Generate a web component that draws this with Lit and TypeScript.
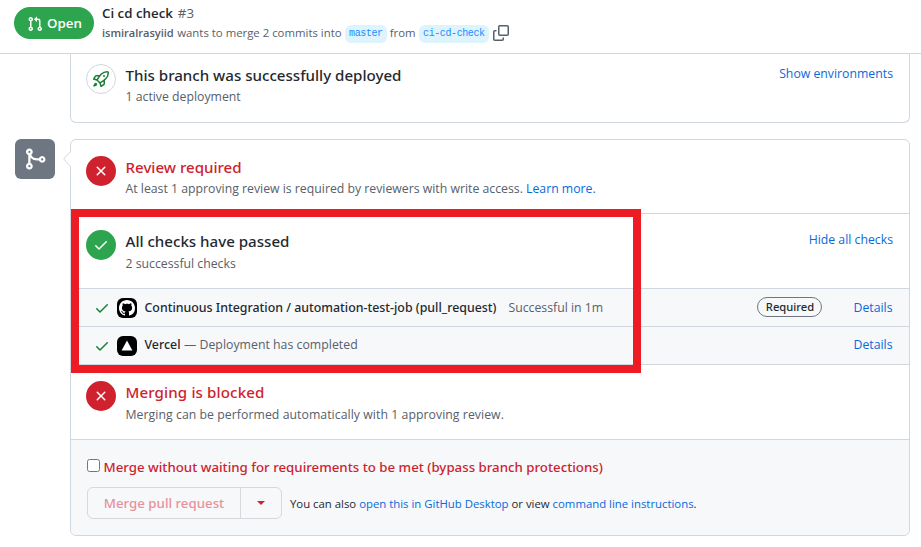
import { LitElement, html, css } from "lit";
import { customElement } from "lit/decorators.js";

const icons: Record<string, string> = {
  pull: "M7.177 3.073L9.573.677A.25.25 0 0110 .854v4.792a.25.25 0 01-.427.177L7.177 3.427a.25.25 0 010-.354zM3.75 2.5a.75.75 0 100 1.5.75.75 0 000-1.5zm-2.25.75a2.25 2.25 0 113 2.122v5.256a2.251 2.251 0 11-1.5 0V5.372A2.25 2.25 0 011.5 3.25zM11 2.5h-1V4h1a1 1 0 011 1v5.628a2.251 2.251 0 101.5 0V5A2.5 2.5 0 0011 2.5zm1 10.25a.75.75 0 111.5 0 .75.75 0 01-1.5 0zM3.75 12a.75.75 0 100 1.5.75.75 0 000-1.5z",
  merge: "M5 3.254V3.25v.005a.75.75 0 110-.005v.004zm.45 1.9a2.25 2.25 0 10-1.95.218v5.256a2.25 2.25 0 101.5 0V7.123A5.735 5.735 0 009.25 9h1.378a2.251 2.251 0 100-1.5H9.25a4.25 4.25 0 01-3.8-2.346zM12.75 9a.75.75 0 100-1.5.75.75 0 000 1.5zm-8.5 4.5a.75.75 0 100-1.5.75.75 0 000 1.5z",
  x: "M3.72 3.72a.75.75 0 011.06 0L8 6.94l3.22-3.22a.75.75 0 111.06 1.06L9.06 8l3.22 3.22a.75.75 0 11-1.06 1.06L8 9.06l-3.22 3.22a.75.75 0 01-1.06-1.06L6.94 8 3.72 4.78a.75.75 0 010-1.06z",
  check: "M13.78 4.22a.75.75 0 010 1.06l-7.25 7.25a.75.75 0 01-1.06 0L2.22 9.28a.75.75 0 011.06-1.06L6 10.94l6.72-6.72a.75.75 0 011.06 0z",
  mark: "M8 0C3.58 0 0 3.58 0 8c0 3.54 2.29 6.53 5.47 7.59.4.07.55-.17.55-.38 0-.19-.01-.82-.01-1.49-2.01.37-2.53-.49-2.69-.94-.09-.23-.48-.94-.82-1.13-.28-.15-.68-.52-.01-.53.63-.01 1.08.58 1.23.82.72 1.21 1.87.87 2.33.66.07-.52.28-.87.51-1.07-1.78-.2-3.64-.89-3.64-3.95 0-.87.31-1.59.82-2.15-.08-.2-.36-1.02.08-2.12 0 0 .67-.21 2.2.82.64-.18 1.32-.27 2-.27s1.36.09 2 .27c1.53-1.04 2.2-.82 2.2-.82.44 1.1.16 1.92.08 2.12.51.56.82 1.27.82 2.15 0 3.07-1.87 3.75-3.65 3.95.29.25.54.73.54 1.48 0 1.07-.01 1.93-.01 2.2 0 .21.15.46.55.38A8.01 8.01 0 0016 8c0-4.42-3.58-8-8-8z",
  rocket: "M14.064 0h.186C15.216 0 16 .784 16 1.75v.186a8.752 8.752 0 0 1-2.564 6.186l-.458.459c-.314.314-.641.616-.979.904v3.207c0 .608-.315 1.172-.833 1.49l-2.774 1.707a.749.749 0 0 1-1.11-.418l-.954-3.102a1.214 1.214 0 0 1-.145-.125L3.754 9.816a1.218 1.218 0 0 1-.124-.145L.528 8.717a.749.749 0 0 1-.418-1.11l1.71-2.774A1.748 1.748 0 0 1 3.31 4h3.204c.288-.338.59-.665.904-.979l.459-.458A8.749 8.749 0 0 1 14.064 0ZM8.938 3.623h-.002l-.458.458c-.76.76-1.437 1.598-2.02 2.5l-1.5 2.317 2.143 2.143 2.317-1.5c.902-.583 1.74-1.26 2.499-2.02l.459-.458a7.25 7.25 0 0 0 2.123-5.127V1.75a.25.25 0 0 0-.25-.25h-.186a7.249 7.249 0 0 0-5.125 2.123ZM3.56 14.56c-.732.732-2.334 1.045-3.005 1.148a.234.234 0 0 1-.201-.064.234.234 0 0 1-.064-.201c.103-.671.416-2.273 1.15-3.003a1.502 1.502 0 1 1 2.12 2.12Zm6.94-3.935c-.088.06-.177.118-.266.175l-2.35 1.521.548 1.783 1.949-1.2a.25.25 0 0 0 .119-.213ZM3.678 8.116 5.2 5.766c.058-.09.117-.178.176-.266H3.309a.25.25 0 0 0-.213.119l-1.2 1.95ZM12 5a1 1 0 1 1-2 0 1 1 0 0 1 2 0Z",
  vercel: "M8 2.6l5.4 10H2.6z",
};

const icon = (name: string, size = 16) => html`<svg width=${size} height=${size} viewBox="0 0 16 16" fill="currentColor"><path fill-rule="evenodd" d=${icons[name]} /></svg>`;

@customElement("app-root")
export class AppRoot extends LitElement {
  static styles = css`
    :host { display: block; position: relative; height: 547px; overflow: hidden; background: #fff; color: #24292f; font-family: "Open Sans", "Noto Sans", sans-serif; font-size: 12.28px; }
    * { box-sizing: border-box; }
    svg { display: block; flex: none; }
    b { font-weight: 600; }
    .header { height: 54px; border-bottom: 1px solid #d0d7de; display: flex; padding: 7px 14px 0; gap: 8px; }
    .state { width: 80px; height: 32px; border-radius: 16px; background: #2da44e; color: #fff; display: flex; align-items: center; gap: 4px; padding-left: 13px; font-size: 13.3px; font-weight: 600; }
    .state svg { margin-top: 1px; }
    .heading { display: flex; flex-direction: column; margin-top: -4px; color: #57606a; white-space: nowrap; }
    .title { font-size: 13.3px; line-height: 20px; }
    .title b { color: #24292f; margin-right: 5px; }
    .meta { display: flex; align-items: center; font-size: 11.38px; height: 20px; line-height: 20px; }
    .meta b { margin-right: 3.5px; font-size: 11.1px; letter-spacing: -0.03px; }
    .branch { font-family: "Liberation Mono", monospace; font-size: 10px; letter-spacing: -0.4px; color: #218bff; background: #ddf4ff; border-radius: 6px; height: 18px; line-height: 18px; padding: 0 4px 0 4.5px; margin: 2px 3px 0; }
    .copy { color: #57606a; margin: -1px 0 0 1px; }
    .main { display: flex; flex-direction: column; padding: 0 11px 0 15px; }
    .card { margin-left: 55px; border: 1px solid #d0d7de; border-radius: 6px; }
    .deploy { border-top: 0; border-radius: 0 0 6px 6px; height: 69px; margin-bottom: 16px; }
    .deploy .section { padding-top: 9px; border: 0; height: 68px; }
    .timeline { display: flex; gap: 15px; align-items: flex-start; }
    .badge { width: 40px; height: 40px; border-radius: 6px; background: #6e7781; color: #fff; display: grid; place-items: center; padding-right: 1px; }
    .merge { flex: 1; margin: 0; position: relative; height: 397px; }
    .notch { position: absolute; left: -8px; top: 11px; }
    .section { display: flex; height: 75px; padding: 15px 16px 0 15px; border-bottom: 1px solid #d0d7de; white-space: nowrap; }
    .review { height: 74px; }
    .dot { width: 30px; height: 30px; margin: 1px 9.5px 0 0; border-radius: 50%; display: grid; place-items: center; color: #fff; flex: none; }
    .red { background: #cf222e; }
    .green { background: #2da44e; }
    .outline { border: 1px solid #d0d7de; color: #1a7f37; }
    .text { flex: 1; }
    h3, .row b, .bypass, .go, .required { font-family: "Noto Sans", sans-serif; font-weight: 500; }
    h3 { margin: 0; font-size: 15.1px; line-height: 24px; }
    .danger { color: #cf222e; }
    .blocked { letter-spacing: 0.12px; }
    p { margin: 0; color: #57606a; line-height: 18px; }
    .low { margin-top: 1px; }
    .lower { margin-top: 2px; }
    .loose { letter-spacing: 0.05px; }
    a { color: #0969da; }
    .link { line-height: 20px; margin-top: 1px; }
    .row { height: 38px; display: flex; align-items: center; background: #f6f8fa; border-bottom: 1px solid #d0d7de; padding: 0 16.5px 0 23px; white-space: nowrap; }
    .row b { font-size: 12.38px; }
    .raised b, .raised span, .raised .right { margin-bottom: 2px; }
    .tick { color: #1a7f37; margin: 1px 7px 0 0; }
    .app { width: 20px; height: 20px; border-radius: 6px; background: #000; color: #fff; display: grid; place-items: center; margin: 1px 7.5px 0 0; }
    .note { color: #57606a; }
    .gap { margin-left: 12px; }
    .dash { margin-left: 3.5px; letter-spacing: 0.03px; }
    .right { margin-left: auto; display: flex; align-items: center; gap: 31px; }
    .required { width: 65px; height: 20px; border: 1px solid #6e7781; border-radius: 10px; font-size: 11.2px; line-height: 18px; text-align: center; margin-bottom: 1px; }
    .footer { height: 95px; background: #f6f8fa; border-radius: 0 0 6px 6px; padding: 17px 16px; white-space: nowrap; }
    .bypass { display: flex; align-items: center; height: 20px; font-size: 13.28px; color: #cf222e; }
    .box { width: 13px; height: 13px; border: 1px solid #767676; border-radius: 2.5px; background: #fff; margin: -3px 3.5px 0 0; }
    .actions { display: flex; align-items: center; margin-top: 10px; font-size: 11.36px; }
    .split { display: flex; width: 195px; height: 32px; border: 1px solid #d5d9dd; border-radius: 6px; margin-right: 8px; }
    .go { width: 153px; border-right: 1px solid #d5d9dd; color: #e7919a; font-size: 13.28px; text-align: center; line-height: 31px; }
    .caret { margin: auto; border: 4px solid transparent; border-top-color: #cf222e; border-bottom: 0; }
    .frame { position: absolute; left: 71px; top: 209px; width: 570px; height: 164px; border: 8px solid #ed1c24; }
  `;
  render() {
    return html`
      <div class="header">
        <div class="state">${icon("pull")}<span>Open</span></div>
        <div class="heading">
          <div class="title"><b>Ci cd check</b><span>#3</span></div>
          <div class="meta">
            <b>ismiralrasyiid</b><span>wants to merge 2 commits into</span><span class="branch">master</span><span>from</span><span class="branch">ci-cd-check</span>
            <svg class="copy" width="16" height="16" viewBox="0 0 16 16" fill="none" stroke="currentColor" stroke-width="1.5"><rect x="5.75" y=".75" width="9.5" height="9.5" rx="1" /><path d="M3.5 5.75H1.75a1 1 0 0 0-1 1v7.5a1 1 0 0 0 1 1h7.5a1 1 0 0 0 1-1V12.5" /></svg>
          </div>
        </div>
      </div>
      <div class="main">
        <div class="card deploy">
          <div class="section">
            <div class="dot outline">${icon("rocket")}</div>
            <div class="text"><h3>This branch was successfully deployed</h3><p class="low">1 active deployment</p></div>
            <a class="link">Show environments</a>
          </div>
        </div>
        <div class="timeline">
          <div class="badge">${icon("merge", 24)}</div>
          <div class="card merge">
            <svg class="notch" width="8" height="16" viewBox="0 0 8 16"><path d="M8 0L.7 8L8 16" fill="#fff" stroke="#d0d7de" /></svg>
            <div class="section review">
              <div class="dot red">${icon("x")}</div>
              <div class="text"><h3 class="danger">Review required</h3><p class="low">At least 1 approving review is required by reviewers with write access. <a>Learn more.</a></p></div>
            </div>
            <div class="section">
              <div class="dot green">${icon("check")}</div>
              <div class="text"><h3>All checks have passed</h3><p class="lower">2 successful checks</p></div>
              <a class="link">Hide all checks</a>
            </div>
            <div class="row">
              <div class="tick">${icon("check")}</div><div class="app">${icon("mark")}</div>
              <b>Continuous Integration / automation-test-job (pull_request)</b><span class="note gap">Successful in 1m</span>
              <div class="right"><span class="required">Required</span><a>Details</a></div>
            </div>
            <div class="row raised">
              <div class="tick">${icon("check")}</div><div class="app">${icon("vercel")}</div>
              <b>Vercel</b><span class="note dash">— Deployment has completed</span>
              <div class="right"><a>Details</a></div>
            </div>
            <div class="section">
              <div class="dot red">${icon("x")}</div>
              <div class="text"><h3 class="danger blocked">Merging is blocked</h3><p class="lower loose">Merging can be performed automatically with 1 approving review.</p></div>
            </div>
            <div class="footer">
              <div class="bypass"><span class="box"></span>Merge without waiting for requirements to be met (bypass branch protections)</div>
              <div class="actions">
                <div class="split"><span class="go">Merge pull request</span><span class="caret"></span></div>
                <span>You can also <a>open this in GitHub Desktop</a> or view <a>command line instructions</a>.</span>
              </div>
            </div>
          </div>
        </div>
      </div>
      <div class="frame"></div>`;
  }
}
